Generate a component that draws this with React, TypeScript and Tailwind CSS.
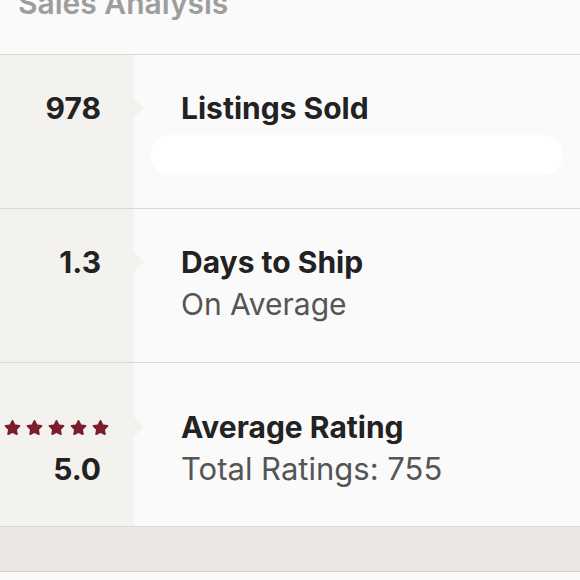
import { FaStar } from "react-icons/fa";

const FONT = { fontFamily: "Inter, 'Noto Sans', sans-serif" };

function Arrow({ top }: { top: string }) {
  return (
    <span
      className={`absolute right-[-10px] h-0 w-0 border-y-[10px] border-l-[10px] border-y-transparent border-l-[#f4f2ee] ${top}`}
    />
  );
}

function Row({
  left,
  title,
  sub,
  height,
  pt,
  arrowTop,
}: {
  left: React.ReactNode;
  title: string;
  sub: React.ReactNode;
  height: string;
  pt: string;
  arrowTop: string;
}) {
  return (
    <div className={`flex border-b border-[#d9d9d9] ${height}`}>
      <div className={`relative flex w-[134px] shrink-0 flex-col items-end bg-[#f4f2ee] pr-[33px] ${pt}`}>
        {left}
        <Arrow top={arrowTop} />
      </div>
      <div className={`flex flex-col pl-[47px] ${pt}`}>
        <div className="text-[30px] font-bold leading-[42px] text-[#222]">{title}</div>
        {sub}
      </div>
    </div>
  );
}

export default function App() {
  return (
    <div className="h-[580px] w-[580px] overflow-hidden bg-[#fafafa]" style={FONT}>
      <div className="flex h-[55px] flex-col overflow-hidden border-b border-[#d9d9d9] pl-[18px]">
        <div className="-mt-[18px] text-[30px] font-semibold leading-[42px] text-[#9d9d9d]">Sales Analysis</div>
      </div>

      <Row
        height="h-[154px]"
        pt="pt-[32px]"
        arrowTop="top-[43px]"
        left={<div className="text-[30px] font-bold leading-[42px] text-[#222]">978</div>}
        title="Listings Sold"
        sub={<div className="ml-[-30px] mt-[6px] h-[40px] w-[412px] rounded-[20px] bg-white" />}
      />

      <Row
        height="h-[154px]"
        pt="pt-[32px]"
        arrowTop="top-[43px]"
        left={<div className="text-[30px] font-bold leading-[42px] text-[#222]">1.3</div>}
        title="Days to Ship"
        sub={<div className="text-[30px] leading-[42px] text-[#555]">On Average</div>}
      />

      <Row
        height="h-[164px]"
        pt="pt-[43px]"
        arrowTop="top-[54px]"
        left={
          <>
            <div className="-mr-[8px] flex h-[42px] items-center gap-[5px] text-[#7a1e2e]">
              {[0, 1, 2, 3, 4].map((i) => (
                <FaStar key={i} className="h-[17px] w-[17px]" />
              ))}
            </div>
            <div className="text-[30px] font-bold leading-[42px] text-[#222]">5.0</div>
          </>
        }
        title="Average Rating"
        sub={<div className="text-[31px] leading-[42px] text-[#555]">Total Ratings: 755</div>}
      />

      <div className="h-[45px] border-b border-[#d6d3ce] bg-[#ebe8e4]" />
    </div>
  );
}
